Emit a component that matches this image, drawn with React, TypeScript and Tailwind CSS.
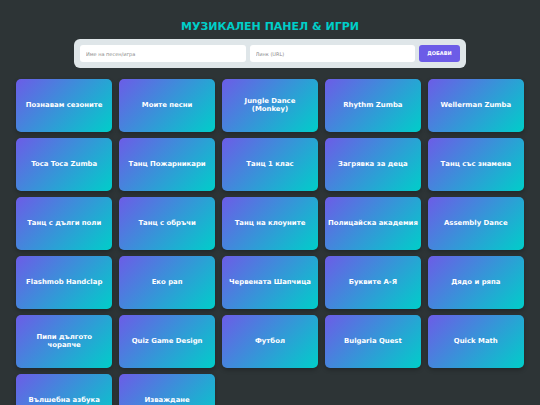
// titles with \n wrap onto two lines, as on the original board
const ITEMS = [
  'Познавам сезоните',
  'Моите песни',
  'Jungle Dance\n(Monkey)',
  'Rhythm Zumba',
  'Wellerman Zumba',
  'Toca Toca Zumba',
  'Танц Пожарникари',
  'Танц 1 клас',
  'Загрявка за деца',
  'Танц със знамена',
  'Танц с дълги поли',
  'Танц с обръчи',
  'Танц на клоуните',
  'Полицайска академия',
  'Assembly Dance',
  'Flashmob Handclap',
  'Еко рап',
  'Червената Шапчица',
  'Буквите А-Я',
  'Дядо и ряпа',
  'Пипи дългото\nчорапче',
  'Quiz Game Design',
  'Футбол',
  'Bulgaria Quest',
  'Quick Math',
  'Вълшебна азбука',
  'Изваждане',
];

function Card({ title }: { title: string }) {
  return (
    <div className="h-[52.5px] rounded-[5px] bg-[linear-gradient(135deg,#6c5ce7,#00cec9)] shadow-[0_2px_4px_rgba(0,0,0,0.25)] flex items-center justify-center px-[2px] text-center">
      <span className="whitespace-pre-line text-[6.9px] leading-[8px] font-bold text-white">{title}</span>
    </div>
  );
}

export default function App() {
  return (
    <div
      className="min-h-screen bg-[#2d3436] px-4 pt-5 pb-4"
      style={{ fontFamily: '"DejaVu Sans", Verdana, sans-serif' }}
    >
      <h1 className="text-center text-[11px] leading-[13px] font-bold text-[#00cec9]">
        МУЗИКАЛЕН ПАНЕЛ &amp; ИГРИ
      </h1>

      <div className="mx-auto mt-[6px] w-[392px] rounded-[6px] bg-[#dfe6e9] p-[6px] flex gap-[4px]">
        <input
          className="flex-1 min-w-0 h-[17px] rounded-[3px] bg-white px-[6px] text-[5px] text-gray-700 placeholder:text-[#8a8a8a] outline-none"
          placeholder="Име на песен/игра"
        />
        <input
          className="flex-1 min-w-0 h-[17px] rounded-[3px] bg-white px-[6px] text-[5px] text-gray-700 placeholder:text-[#8a8a8a] outline-none"
          placeholder="Линк (URL)"
        />
        <button className="w-[41px] h-[17px] rounded-[3px] bg-[#6c5ce7] text-[5px] font-bold text-white">
          ДОБАВИ
        </button>
      </div>

      <div className="mt-[11px] grid grid-cols-5 gap-[6.5px]">
        {ITEMS.map((t) => (
          <Card key={t} title={t} />
        ))}
      </div>
    </div>
  );
}
